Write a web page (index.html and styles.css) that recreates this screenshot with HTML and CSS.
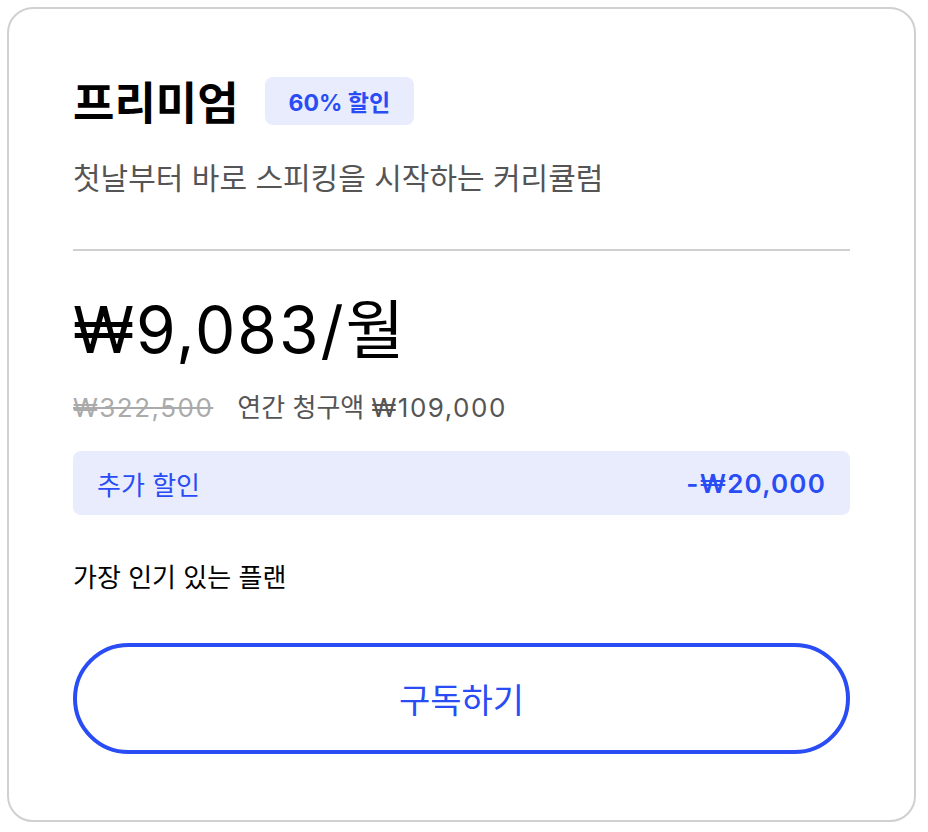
FILE: index.html
```html
<!DOCTYPE html>
<html lang="ko">
<head>
<meta charset="utf-8">
<link rel="stylesheet" href="styles.css">
</head>
<body>
<div class="card">
  <div class="title-row">
    <h1 class="title">프리미엄</h1>
    <span class="badge">60% 할인</span>
  </div>
  <p class="subtitle">첫날부터 바로 스피킹을 시작하는 커리큘럼</p>
  <hr class="divider">
  <div class="price"><span class="num">₩9,083/</span>월</div>
  <div class="billing">
    <span class="old num">₩322,500</span>
    <span class="annual">연간 청구액 <span class="num">₩109,000</span></span>
  </div>
  <div class="extra">
    <span>추가 할인</span>
    <span class="extra-amount">-₩20,000</span>
  </div>
  <p class="popular">가장 인기 있는 플랜</p>
  <button class="subscribe">구독하기</button>
</div>
</body>
</html>
```
FILE: styles.css
```css
* { box-sizing: border-box; }
html, body { margin: 0; padding: 0; background: #fff; }
body {
  font-family: "Inter", "Noto Sans CJK KR", sans-serif;
  color: #000;
  padding: 7px;
}
.card {
  width: 909px;
  height: 815px;
  border: 2px solid #d0d0d0;
  border-radius: 26px;
  padding: 68px 64px 0 64px;
  display: flex;
  flex-direction: column;
}
.title-row {
  display: flex;
  align-items: center;
  gap: 26px;
  height: 48px;
}
.title {
  margin: 0;
  font-family: "Noto Sans CJK KR", sans-serif;
  font-size: 45px;
  font-weight: 700;
  line-height: 48px;
}
.badge {
  background: #e8ecfd;
  color: #2a4cf5;
  border-radius: 8px;
  height: 48px;
  padding: 0 24px;
  display: flex;
  align-items: center;
  font-size: 23px;
  font-weight: 700;
}
.subtitle {
  margin: 31px 0 0;
  font-family: "Noto Sans CJK KR", sans-serif;
  font-size: 30px;
  line-height: 40px;
  color: #555;
}
.divider {
  margin: 53px 0 0;
  border: 0;
  border-top: 2px solid #d0d0d0;
  height: 0;
}
.price {
  margin-top: 40px;
  font-size: 64px;
  line-height: 77px;
  font-weight: 400;
}
.price .num {
  letter-spacing: 2px;
}
.billing {
  margin-top: 22px;
  font-size: 26px;
  line-height: 36px;
  display: flex;
  gap: 24px;
  color: #555;
}
.billing .num {
  letter-spacing: 1.5px;
}
.old {
  color: #aaa;
  text-decoration: line-through;
}
.extra {
  margin-top: 25px;
  height: 64px;
  background: #e8ecfd;
  border-radius: 8px;
  padding: 0 24px;
  display: flex;
  align-items: center;
  justify-content: space-between;
  color: #2a4cf5;
  font-size: 26px;
}
.extra-amount {
  font-weight: 600;
  letter-spacing: 1.2px;
}
.popular {
  margin: 46px 0 0;
  font-size: 26px;
  line-height: 34px;
}
.subscribe {
  margin-top: 48px;
  height: 111px;
  width: 100%;
  border: 4px solid #2a4cf5;
  border-radius: 56px;
  background: #fff;
  color: #2a4cf5;
  font-family: "Noto Sans CJK KR", sans-serif;
  font-size: 34px;
}
```
